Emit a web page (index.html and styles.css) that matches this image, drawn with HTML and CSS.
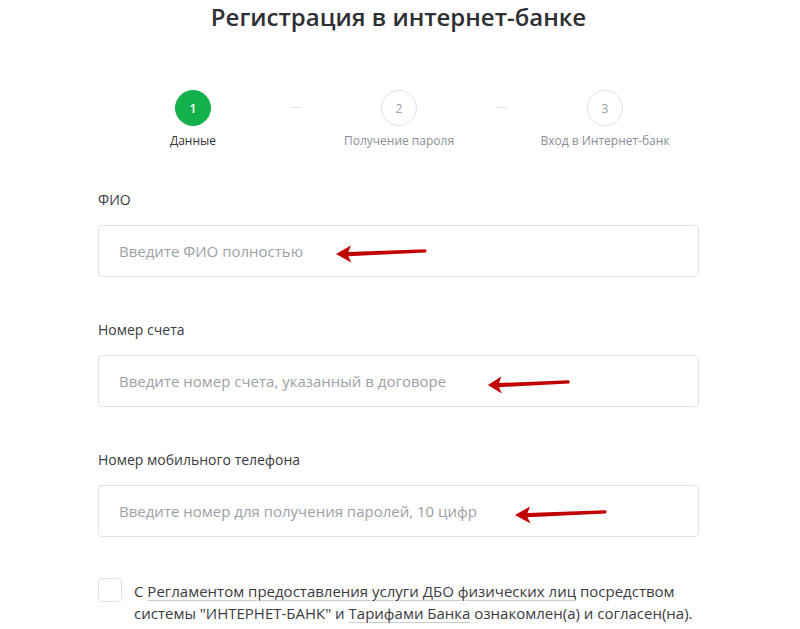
FILE: index.html
```html
<!DOCTYPE html>
<html lang="ru">
<head>
<meta charset="utf-8">
<title>Регистрация в интернет-банке</title>
<link rel="stylesheet" href="styles.css">
</head>
<body>
<main class="page">
  <h1 class="title">Регистрация в интернет-банке</h1>

  <ol class="steps">
    <li class="step step--active">
      <span class="step__num">1</span>
      <span class="step__label">Данные</span>
    </li>
    <li class="step__dash"></li>
    <li class="step">
      <span class="step__num">2</span>
      <span class="step__label">Получение пароля</span>
    </li>
    <li class="step__dash"></li>
    <li class="step">
      <span class="step__num">3</span>
      <span class="step__label">Вход в Интернет-банк</span>
    </li>
  </ol>

  <form class="form">
    <div class="field">
      <label class="field__label">ФИО</label>
      <div class="field__box">
        <span class="field__placeholder">Введите ФИО полностью</span>
        <svg class="arrow arrow--1" viewBox="0 0 94 20" preserveAspectRatio="none"><path d="M1 11 L16 2.5 L13.5 9 L91.5 6.2 Q93.5 7.6 91.8 9.4 L13.5 13.2 L16.5 19.5 Z"/></svg>
      </div>
    </div>
    <div class="field">
      <label class="field__label">Номер счета</label>
      <div class="field__box">
        <span class="field__placeholder">Введите номер счета, указанный в договоре</span>
        <svg class="arrow arrow--2" viewBox="0 0 94 20" preserveAspectRatio="none"><path d="M1 11 L16 2.5 L13.5 9 L91.5 6.2 Q93.5 7.6 91.8 9.4 L13.5 13.2 L16.5 19.5 Z"/></svg>
      </div>
    </div>
    <div class="field">
      <label class="field__label">Номер мобильного телефона</label>
      <div class="field__box">
        <span class="field__placeholder">Введите номер для получения паролей, 10 цифр</span>
        <svg class="arrow arrow--3" viewBox="0 0 94 20" preserveAspectRatio="none"><path d="M1 11 L16 2.5 L13.5 9 L91.5 6.2 Q93.5 7.6 91.8 9.4 L13.5 13.2 L16.5 19.5 Z"/></svg>
      </div>
    </div>

    <div class="agree">
      <span class="agree__box"></span>
      <p class="agree__text">С <span class="link">Регламентом предоставления услуги ДБО физических лиц</span> посредством системы "ИНТЕРНЕТ-БАНК" и <span class="link">Тарифами Банка</span> ознакомлен(а) и согласен(на).</p>
    </div>
  </form>
</main>
</body>
</html>
```

FILE: styles.css
```css
* { box-sizing: border-box; }

html, body {
  margin: 0;
  padding: 0;
  background: #ffffff;
}

body {
  font-family: "Open Sans", "Noto Sans", sans-serif;
  color: #333333;
  overflow: hidden;
}

.page {
  width: 601px;
  margin-left: 98px;
}

.title {
  margin: 0;
  font-size: 24px;
  line-height: 34px;
  font-weight: 600;
  color: #2f3033;
  text-align: center;
}

.steps {
  list-style: none;
  margin: 56px 0 0 2px;
  padding: 0;
  display: grid;
  grid-template-columns: 186px 20px 186px 20px 186px;
  width: 620px;
}

.step {
  display: flex;
  flex-direction: column;
  align-items: center;
}

.step__num {
  width: 36px;
  height: 36px;
  border-radius: 50%;
  border: 1px solid #dde2ea;
  display: flex;
  align-items: center;
  justify-content: center;
  font-size: 12px;
  color: #9a9ea5;
}

.step--active .step__num {
  background: #13b04b;
  border-color: #13b04b;
  color: #ffffff;
  font-weight: 600;
}

.step__label {
  margin-top: 6px;
  font-size: 12px;
  line-height: 18px;
  color: #8a8e94;
}

.step--active .step__label {
  color: #333333;
}

.step__dash {
  height: 1px;
  background: #e3e6ea;
  margin: 17px 5px 0;
  width: 10px;
  justify-self: center;
}

.form {
  margin-top: 39px;
}

.field {
  margin-bottom: 42px;
}

.field__label {
  display: block;
  font-size: 14px;
  line-height: 21px;
  color: #3a3b3e;
  margin-bottom: 15px;
}

.field__box {
  position: relative;
  height: 52px;
  border: 1px solid #dfe3e9;
  border-radius: 4px;
  display: flex;
  align-items: center;
  padding-left: 20px;
}

.field__placeholder {
  font-size: 15px;
  color: #9c9fa4;
}

.arrow {
  position: absolute;
  height: 20px;
  fill: #c10000;
}

.arrow--1 { left: 236px; top: 17px; width: 93px; }
.arrow--2 { left: 388px; top: 18px; width: 84px; }
.arrow--3 { left: 415px; top: 18px; width: 94px; }

.agree {
  display: flex;
  align-items: flex-start;
  gap: 12px;
  margin-top: -1px;
}

.agree__box {
  flex: none;
  width: 24px;
  height: 24px;
  border: 1px solid #dde2ea;
  border-radius: 4px;
}

.agree__text {
  margin: 2px 0 0;
  font-size: 15px;
  line-height: 22px;
  color: #3a3b3e;
}

.link {
  text-decoration: underline;
  text-decoration-color: #c9ccd1;
  text-underline-offset: 3px;
}
```
